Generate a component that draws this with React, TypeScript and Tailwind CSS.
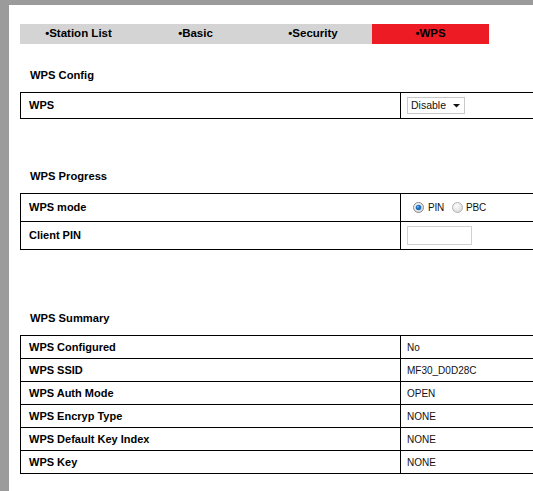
import React from "react";

const Radio = ({ checked }: { checked: boolean }) => (
  <svg width="11" height="11" viewBox="0 0 11 11" className="shrink-0">
    <defs>
      <radialGradient id={checked ? "rgc" : "rgu"} cx="40%" cy="35%" r="70%">
        <stop offset="0%" stopColor="#ffffff" />
        <stop offset="100%" stopColor={checked ? "#d8d8d8" : "#d6d6d6"} />
      </radialGradient>
    </defs>
    <circle cx="5.5" cy="5.5" r="5" fill={`url(#${checked ? "rgc" : "rgu"})`} stroke={checked ? "#8a8a8a" : "#b4b4b4"} strokeWidth="1" />
    {checked && (
      <>
        <circle cx="5.5" cy="5.5" r="2.8" fill="#1f6fbf" />
        <circle cx="4.9" cy="4.8" r="1" fill="#7fb6ea" />
      </>
    )}
  </svg>
);

const Tab = ({ label, active, w }: { label: string; active?: boolean; w: string }) => (
  <div
    className={`${w} h-[20px] flex items-center justify-center text-[11.5px] font-bold text-black ${
      active ? "bg-[#ed1c24]" : "bg-[#d4d4d4]"
    }`}
  >
    •{label}
  </div>
);

const Heading = ({ children, mt }: { children: React.ReactNode; mt: string }) => (
  <div className={`${mt} h-[14px] leading-[14px] pl-[10px] text-[11.2px] font-bold text-black`}>{children}</div>
);

const Row = ({ h, label, children }: { h: string; label: string; children: React.ReactNode }) => (
  <div className={`box-content ${h} flex border-t border-black first:border-t-0`}>
    <div className="w-[380px] shrink-0 border-r border-black flex items-center pl-[8px] text-[11px] font-bold text-black">
      {label}
    </div>
    <div className="flex items-center pl-[6px] text-[10px] text-[#111]">{children}</div>
  </div>
);

export default function App() {
  const summary: [string, string][] = [
    ["WPS Configured", "No"],
    ["WPS SSID", "MF30_D0D28C"],
    ["WPS Auth Mode", "OPEN"],
    ["WPS Encryp Type", "NONE"],
    ["WPS Default Key Index", "NONE"],
    ["WPS Key", "NONE"],
  ];
  return (
    <div className="w-full h-[491px] overflow-hidden bg-white border-t-[5px] border-l-[9px] border-[#9b9b9b] font-['Liberation_Sans',Arial,sans-serif]">
      <div className="pl-[11px] pt-[19px]">
        <div className="flex">
          <Tab w="w-[117px]" label="Station List" />
          <Tab w="w-[117px]" label="Basic" />
          <Tab w="w-[118px]" label="Security" />
          <Tab w="w-[117px]" label="WPS" active />
        </div>

        <Heading mt="mt-[24px]">WPS Config</Heading>
        <div className="mt-[10px] w-[620px] border border-black">
          <Row h="h-[25px]" label="WPS">
            <div className="w-[58px] h-[17px] border border-[#c9c9c9] bg-white flex items-center justify-between pl-[3px] pr-[4px] text-[10.5px] text-[#111]">
              <span>Disable</span>
              <svg width="7" height="5" viewBox="0 0 7 5">
                <path d="M0 1 H7 L3.5 4.5 Z" fill="#111" />
              </svg>
            </div>
          </Row>
        </div>

        <Heading mt="mt-[50px]">WPS Progress</Heading>
        <div className="mt-[10px] w-[620px] border border-black">
          <Row h="h-[27px]" label="WPS mode">
            <div className="flex items-center pl-[6px]">
              <Radio checked />
              <span className="ml-[4px] text-[10px] tracking-[-0.2px]">PIN</span>
              <span className="ml-[8px]">
                <Radio checked={false} />
              </span>
              <span className="ml-[3px] text-[10px] tracking-[-0.2px]">PBC</span>
            </div>
          </Row>
          <Row h="h-[27px]" label="Client PIN">
            <div className="w-[65px] h-[19px] border border-[#d2d2d2] bg-white" />
          </Row>
        </div>

        <Heading mt="mt-[61px]">WPS Summary</Heading>
        <div className="mt-[10px] w-[620px] border border-black">
          {summary.map(([k, v]) => (
            <Row key={k} h="h-[22px]" label={k}>
              {v}
            </Row>
          ))}
        </div>
      </div>
    </div>
  );
}
